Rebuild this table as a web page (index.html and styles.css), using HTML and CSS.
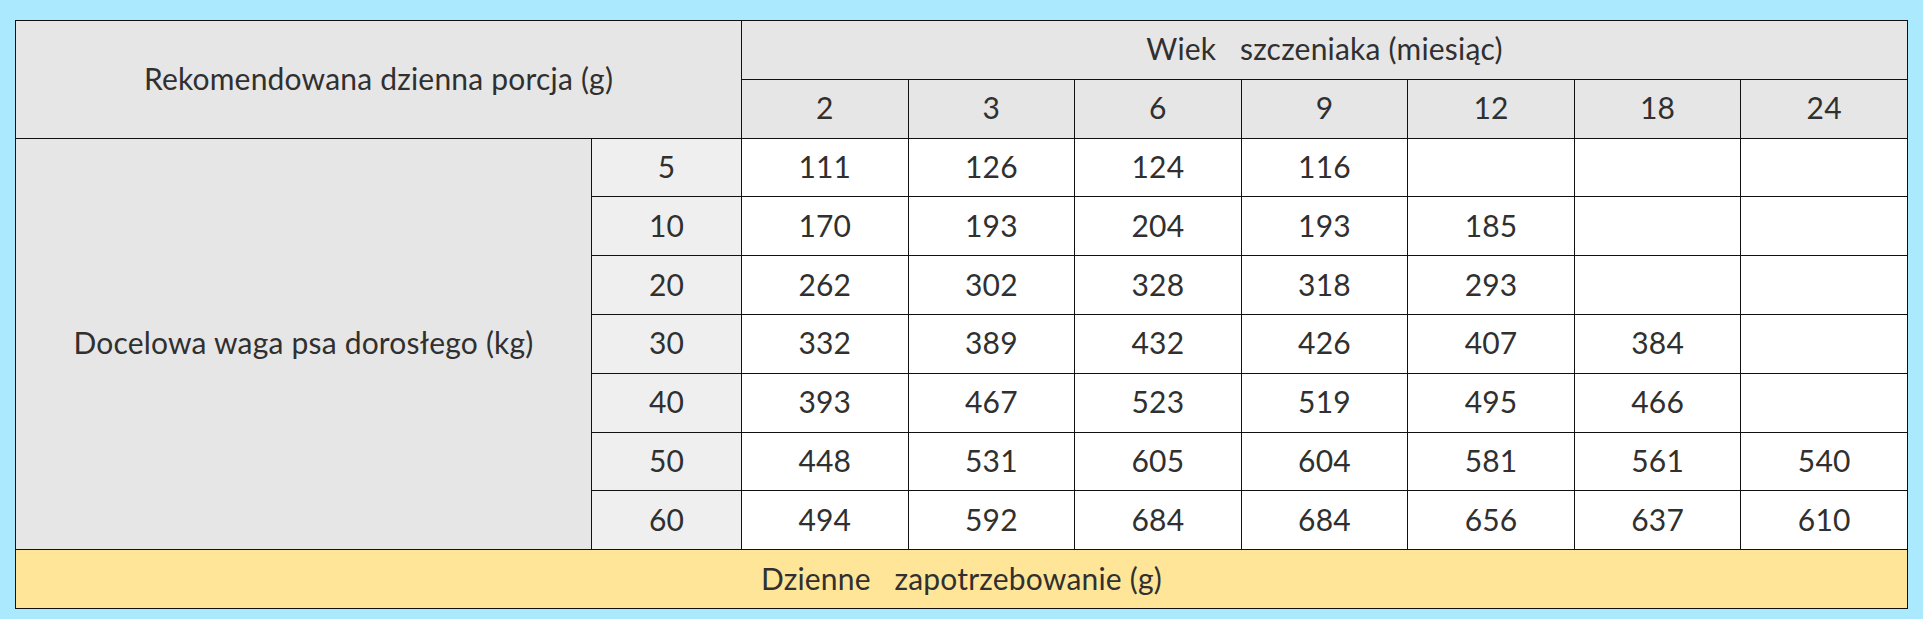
FILE: index.html
```html
<!DOCTYPE html>
<html lang="pl">
<head>
<meta charset="utf-8">
<title>Rekomendowana dzienna porcja</title>
<link rel="stylesheet" href="styles.css">
</head>
<body>
<table class="portion">
  <colgroup>
    <col class="c-label">
    <col class="c-weight">
    <col class="c-age"><col class="c-age"><col class="c-age"><col class="c-age"><col class="c-age"><col class="c-age"><col class="c-age">
  </colgroup>
  <thead>
    <tr>
      <th class="head" colspan="2" rowspan="2">Rekomendowana dzienna porcja (g)</th>
      <th class="head" colspan="7">Wiek&nbsp;&nbsp;&nbsp;szczeniaka (miesiąc)</th>
    </tr>
    <tr>
      <th class="head">2</th><th class="head">3</th><th class="head">6</th><th class="head">9</th><th class="head">12</th><th class="head">18</th><th class="head">24</th>
    </tr>
  </thead>
  <tbody>
    <tr>
      <th class="head" rowspan="7">Docelowa waga psa dorosłego (kg)</th>
      <th class="weight">5</th>
      <td>111</td><td>126</td><td>124</td><td>116</td><td></td><td></td><td></td>
    </tr>
    <tr><th class="weight">10</th><td>170</td><td>193</td><td>204</td><td>193</td><td>185</td><td></td><td></td></tr>
    <tr><th class="weight">20</th><td>262</td><td>302</td><td>328</td><td>318</td><td>293</td><td></td><td></td></tr>
    <tr><th class="weight">30</th><td>332</td><td>389</td><td>432</td><td>426</td><td>407</td><td>384</td><td></td></tr>
    <tr><th class="weight">40</th><td>393</td><td>467</td><td>523</td><td>519</td><td>495</td><td>466</td><td></td></tr>
    <tr><th class="weight">50</th><td>448</td><td>531</td><td>605</td><td>604</td><td>581</td><td>561</td><td>540</td></tr>
    <tr><th class="weight">60</th><td>494</td><td>592</td><td>684</td><td>684</td><td>656</td><td>637</td><td>610</td></tr>
  </tbody>
  <tfoot>
    <tr><td class="foot" colspan="9">Dzienne&nbsp;&nbsp;&nbsp;zapotrzebowanie (g)</td></tr>
  </tfoot>
</table>
</body>
</html>
```

FILE: styles.css
```css
html, body {
  margin: 0;
  background: #aae9fe;
}
body {
  padding: 20px 0 0 15px;
  font-family: Lato, "Open Sans", sans-serif;
  color: #303030;
}
.portion {
  border-collapse: collapse;
  table-layout: fixed;
  width: 1892px;
  font-size: 30px;
  letter-spacing: 0.2px;
}
.c-label { width: 576px; }
.c-weight { width: 150px; }
.c-age { width: 166.57px; }
.portion th,
.portion td {
  border: 1px solid #111111;
  height: 58.8px;
  padding: 0 0 3px;
  text-align: center;
  vertical-align: middle;
  font-weight: 400;
  background: #ffffff;
  box-sizing: border-box;
}
.portion .head { background: #e7e6e7; }
.portion .weight { background: #efefef; }
.portion .foot { background: #ffe598; }
```
